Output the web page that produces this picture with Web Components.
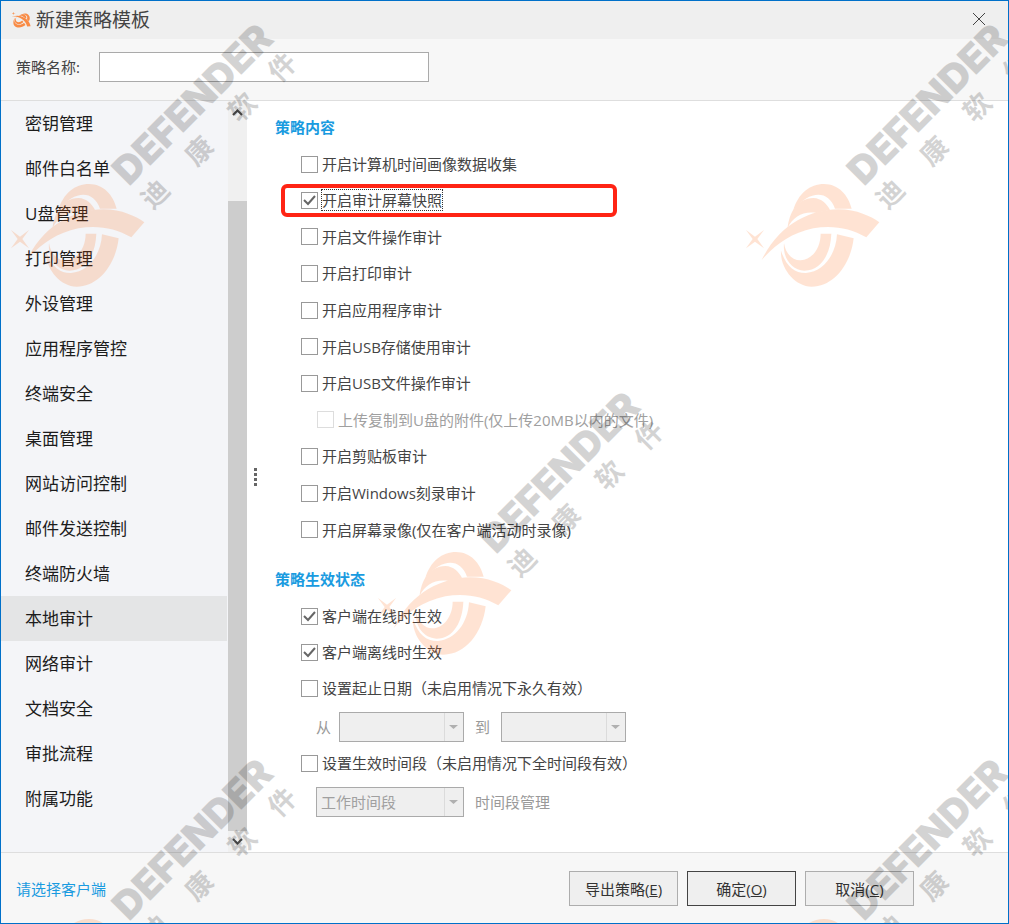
<!DOCTYPE html>
<html lang="zh-CN">
<head>
<meta charset="UTF-8">
<meta name="viewport" content="width=device-width, initial-scale=1.0">
<title>新建策略模板</title>
<style>
    html, body {
        height: 100%;
        margin: 0;
    }
    body {
        font-family: "Open Sans", "Noto Sans CJK SC", sans-serif;
        font-size: 15px;
        line-height: 20px;
        color: #444;
    }
</style>
</head>
<body>
<policy-dialog></policy-dialog>

<script>
const LOGO = `
    <path d="M280 630C295 580 330 552 372 552C415 552 445 585 455 626L405 626C385 570 330 570 280 630Z"/>
    <path d="M263 683C268 640 290 595 340 594C365 595 380 612 390 629C378 633 360 636 350 639C310 632 280 650 263 683Z"/>
    <path d="M185 780C240 670 330 630 415 628C470 628 515 650 538 667L499 712C450 685 400 675 340 685C270 700 225 735 185 780Z"/>
    <path d="M252 730C258 765 280 782 302 781C335 780 362 745 362 701L394 701C392 760 365 812 313 812C275 810 248 775 252 730Z"/>
    <path d="M243 752C258 800 285 820 318 819C370 815 408 765 411 703L461 715C452 795 400 860 335 860C285 860 240 805 243 752Z"/>
    <path d="M138 690L165 710L192 690L172 717L192 745L165 725L138 745L158 717Z"/>`;

class TitleBar extends HTMLElement {
    constructor() {
        super();
        this.attachShadow({ mode: 'open' });
    }

    connectedCallback() {
        this.shadowRoot.innerHTML = `
            <style>
                :host {
                    display: flex;
                    align-items: center;
                    height: 38px;
                    padding: 0 17px 0 11px;
                    background: #efefef;
                }
                .logo {
                    width: 19px;
                    height: 16px;
                    margin-right: 5px;
                    fill: #f98b45;
                }
                h1 {
                    flex: 1;
                    margin: 0;
                    font-size: 19px;
                    line-height: 24px;
                    font-weight: 400;
                    color: #444;
                }
                button {
                    display: flex;
                    padding: 4px;
                    border: none;
                    background: none;
                }
                button svg {
                    width: 16px;
                    height: 16px;
                    stroke: #444;
                    fill: none;
                }
            </style>
            <svg class="logo" viewBox="180 568 335 282" aria-hidden="true"><g transform="rotate(45 338 706)">${LOGO}</g></svg>
            <h1><slot></slot></h1>
            <button type="button" aria-label="关闭">
                <svg viewBox="0 0 16 16"><path d="M2 1L14 13M14 1L2 13"/></svg>
            </button>
        `;
    }
}

class NavList extends HTMLElement {
    constructor() {
        super();
        this.attachShadow({ mode: 'open' });
        this.items = ['密钥管理', '邮件白名单', 'U盘管理', '打印管理', '外设管理', '应用程序管控', '终端安全', '桌面管理',
            '网站访问控制', '邮件发送控制', '终端防火墙', '本地审计', '网络审计', '文档安全', '审批流程', '附属功能'];
        this.active = '本地审计';
    }

    connectedCallback() {
        this.render();
    }

    render() {
        this.shadowRoot.innerHTML = `
            <style>
                :host {
                    display: flex;
                    gap: 1px;
                    background: #f4f5f8;
                }
                nav {
                    flex: 1;
                    display: flex;
                    flex-direction: column;
                }
                a {
                    padding: 0 24px;
                    font-size: 17px;
                    line-height: 45px;
                    color: #1c1c1c;
                    text-decoration: none;
                }
                a[aria-current] {
                    background: #e4e5e6;
                }
                .scrollbar {
                    display: flex;
                    flex-direction: column;
                    width: 19px;
                    background: #f0f0f0;
                }
                .scrollbar svg {
                    width: 19px;
                    height: 21px;
                    fill: none;
                    stroke: #505050;
                    stroke-width: 2;
                }
                .before {
                    flex: 79;
                }
                .thumb {
                    flex: 629;
                    background: #cdcdcd;
                }
            </style>
            <nav>
                ${this.items.map(item => `<a href="#"${item === this.active ? ' aria-current="page"' : ''}>${item}</a>`).join('')}
            </nav>
            <div class="scrollbar">
                <svg viewBox="0 0 19 21"><path d="M5 14L9.500 9.500L14 14"/></svg>
                <div class="before"></div>
                <div class="thumb"></div>
                <svg viewBox="0 0 19 21"><path d="M5 8L9.500 12.500L14 8"/></svg>
            </div>
        `;
    }
}

class CheckItem extends HTMLElement {
    constructor() {
        super();
        this.attachShadow({ mode: 'open' });
    }

    connectedCallback() {
        const checked = this.hasAttribute('checked') ? 'checked' : '';
        const disabled = this.hasAttribute('disabled') ? 'disabled' : '';
        this.shadowRoot.innerHTML = `
            <style>
                :host {
                    flex: 1 0 36px;
                    display: flex;
                    align-items: center;
                }
                :host([disabled]) {
                    margin-left: 16px;
                    color: #a0a0a0;
                }
                :host([marked]) {
                    box-sizing: border-box;
                    flex: none;
                    width: 336px;
                    height: 33px;
                    margin: 1px 0 2px -20px;
                    padding-left: 16px;
                    border: 4px solid #ff2414;
                    border-radius: 6px;
                }
                label {
                    display: flex;
                    align-items: center;
                    gap: 4px;
                }
                input {
                    appearance: none;
                    box-sizing: border-box;
                    width: 17px;
                    height: 17px;
                    margin: 0;
                    border: 1px solid #999;
                    background: #fff;
                }
                input:disabled {
                    border-color: #ddd;
                }
                .box {
                    display: grid;
                }
                .box > * {
                    grid-area: 1 / 1;
                }
                svg {
                    display: none;
                    width: 17px;
                    height: 17px;
                    fill: none;
                    stroke: #666;
                    stroke-width: 2;
                    pointer-events: none;
                }
                input:checked + svg {
                    display: block;
                }
                :host([marked]) .text {
                    outline: 1px dotted #333;
                }
            </style>
            <label>
                <span class="box">
                    <input type="checkbox" ${checked} ${disabled}>
                    <svg viewBox="0 0 17 17"><path d="M3 8L7 12L14 4"/></svg>
                </span>
                <span class="text"><slot></slot></span>
            </label>
        `;
    }
}

class DropDown extends HTMLElement {
    constructor() {
        super();
        this.attachShadow({ mode: 'open' });
    }

    connectedCallback() {
        const value = this.getAttribute('value') || '';
        this.shadowRoot.innerHTML = `
            <style>
                :host {
                    display: grid;
                    grid-template-columns: 1fr 20px;
                    width: 125px;
                    height: 30px;
                }
                :host([wide]) {
                    width: 148px;
                }
                select {
                    grid-area: 1 / 1 / 2 / 3;
                    appearance: none;
                    width: 100%;
                    padding: 0 4px;
                    border: 1px solid #aaa;
                    border-radius: 0;
                    background: #efefef;
                    font: inherit;
                    color: #a0a0a0;
                    opacity: 1;
                }
                svg {
                    grid-area: 1 / 2;
                    width: 20px;
                    height: 30px;
                    fill: #b0b0b0;
                    pointer-events: none;
                }
                line {
                    stroke: #c8c8c8;
                }
            </style>
            <select disabled aria-label="${this.getAttribute('label')}"><option>${value}</option></select>
            <svg viewBox="0 0 20 30"><line x1="0" y1="1" x2="0" y2="29"/><path d="M5 13H14L9.500 17Z"/></svg>
        `;
    }
}

class PolicyContent extends HTMLElement {
    constructor() {
        super();
        this.attachShadow({ mode: 'open' });
    }

    connectedCallback() {
        this.shadowRoot.innerHTML = `
            <style>
                :host {
                    display: block;
                    padding: 16px 0 0 12px;
                    background: #fff;
                }
                h2 {
                    margin: 0;
                    font-size: 15px;
                    line-height: 20px;
                    font-weight: 700;
                    color: #1a9be0;
                }
                .group {
                    display: flex;
                    flex-direction: column;
                    padding: 9px 0 21px 26px;
                }
                .audit {
                    min-height: 402px;
                }
                .row {
                    display: flex;
                    align-items: center;
                    gap: 11px;
                    padding: 6px 0 3px 15px;
                    color: #999;
                }
                .row span {
                    line-height: 30px;
                }
                .from, .to {
                    display: flex;
                    align-items: center;
                    gap: 8px;
                }
                .to {
                    gap: 11px;
                }
            </style>
            <h2>策略内容</h2>
            <div class="group audit">
                <check-item>开启计算机时间画像数据收集</check-item>
                <check-item checked marked>开启审计屏幕快照</check-item>
                <check-item>开启文件操作审计</check-item>
                <check-item>开启打印审计</check-item>
                <check-item>开启应用程序审计</check-item>
                <check-item>开启USB存储使用审计</check-item>
                <check-item>开启USB文件操作审计</check-item>
                <check-item disabled>上传复制到U盘的附件(仅上传20MB以内的文件)</check-item>
                <check-item>开启剪贴板审计</check-item>
                <check-item>开启Windows刻录审计</check-item>
                <check-item>开启屏幕录像(仅在客户端活动时录像)</check-item>
            </div>
            <h2>策略生效状态</h2>
            <div class="group">
                <check-item checked>客户端在线时生效</check-item>
                <check-item checked>客户端离线时生效</check-item>
                <check-item>设置起止日期（未启用情况下永久有效）</check-item>
                <div class="row">
                    <div class="from"><span>从</span><drop-down label="从"></drop-down></div>
                    <div class="to"><span>到</span><drop-down label="到"></drop-down></div>
                </div>
                <check-item>设置生效时间段（未启用情况下全时间段有效）</check-item>
                <div class="row">
                    <drop-down wide label="时间段" value="工作时间段"></drop-down>
                    <span>时间段管理</span>
                </div>
            </div>
        `;
    }
}

class WaterMark extends HTMLElement {
    constructor() {
        super();
        this.attachShadow({ mode: 'open' });
        this.tiles = [[0, 0], [735, 0], [367, 368], [0, 735], [735, 735]];
    }

    connectedCallback() {
        this.shadowRoot.innerHTML = `
            <style>
                :host {
                    position: absolute;
                    inset: 0;
                    overflow: hidden;
                    pointer-events: none;
                }
                svg {
                    position: absolute;
                    width: 310px;
                    height: 310px;
                    opacity: .17;
                }
                .latin {
                    font: 900 39px Inter, "Liberation Sans", sans-serif;
                }
                .han {
                    font: 700 27px "Noto Sans CJK SC", sans-serif;
                }
            </style>
            ${this.tiles.map(([x, y]) => `
                <svg viewBox="0 0 310 310" style="left: ${x}px; top: ${y}px" aria-hidden="true">
                    <g fill="#ff6002" transform="translate(-36 -1) scale(.3333)">${LOGO}</g>
                    <text class="latin" transform="translate(128 186) rotate(-45)">DEFENDER</text>
                    <g class="han" text-anchor="middle">
                        <text transform="translate(161 200) rotate(-45)">迪</text>
                        <text transform="translate(205 157) rotate(-45)">康</text>
                        <text transform="translate(248 113) rotate(-45)">软</text>
                        <text transform="translate(288 73) rotate(-45)">件</text>
                    </g>
                </svg>`).join('')}
        `;
    }
}

class PolicyDialog extends HTMLElement {
    constructor() {
        super();
        this.attachShadow({ mode: 'open' });
    }

    connectedCallback() {
        this.shadowRoot.innerHTML = `
            <style>
                :host {
                    position: relative;
                    box-sizing: border-box;
                    display: flex;
                    flex-direction: column;
                    min-height: 100%;
                    border: 1px solid #0070c9;
                    background: #f7f7f7;
                }
                .name {
                    display: flex;
                    align-items: center;
                    gap: 19px;
                    padding: 13px 15px 18px;
                    border-bottom: 1px solid #dedede;
                }
                .name input {
                    box-sizing: border-box;
                    width: 330px;
                    height: 30px;
                    border: 1px solid #aaa;
                    background: #fff;
                    font: inherit;
                }
                main {
                    flex: 1;
                    display: flex;
                }
                nav-list {
                    flex: 0 0 246px;
                }
                .splitter {
                    display: flex;
                    align-items: center;
                    justify-content: center;
                    width: 16px;
                    background: #fff;
                }
                .splitter svg {
                    width: 3px;
                    height: 18px;
                    fill: #666;
                }
                policy-content {
                    flex: 1;
                }
                footer {
                    display: flex;
                    align-items: center;
                    gap: 9px;
                    padding: 18px 94px 17px 15px;
                    border-top: 1px solid #dedede;
                }
                footer a {
                    flex: 1;
                    color: #1a9be0;
                    text-decoration: none;
                }
                footer button {
                    width: 109px;
                    height: 35px;
                    padding: 0;
                    border: 1px solid #adadad;
                    background: #efefef;
                    font: inherit;
                    color: #333;
                }
                footer .default {
                    border-color: #444;
                }
            </style>
            <title-bar>新建策略模板</title-bar>
            <div class="name">
                <label for="name">策略名称:</label>
                <input id="name" type="text">
            </div>
            <main>
                <nav-list></nav-list>
                <div class="splitter">
                    <svg viewBox="0 0 3 18"><path d="M0 0h3v3H0zM0 5h3v3H0zM0 10h3v3H0zM0 15h3v3H0z"/></svg>
                </div>
                <policy-content></policy-content>
            </main>
            <footer>
                <a href="#">请选择客户端</a>
                <button type="button">导出策略(<u>E</u>)</button>
                <button type="button" class="default">确定(<u>O</u>)</button>
                <button type="button">取消(<u>C</u>)</button>
            </footer>
            <water-mark></water-mark>
        `;
    }
}

customElements.define('title-bar', TitleBar);
customElements.define('nav-list', NavList);
customElements.define('check-item', CheckItem);
customElements.define('drop-down', DropDown);
customElements.define('policy-content', PolicyContent);
customElements.define('water-mark', WaterMark);
customElements.define('policy-dialog', PolicyDialog);
</script>
</body>
</html>
